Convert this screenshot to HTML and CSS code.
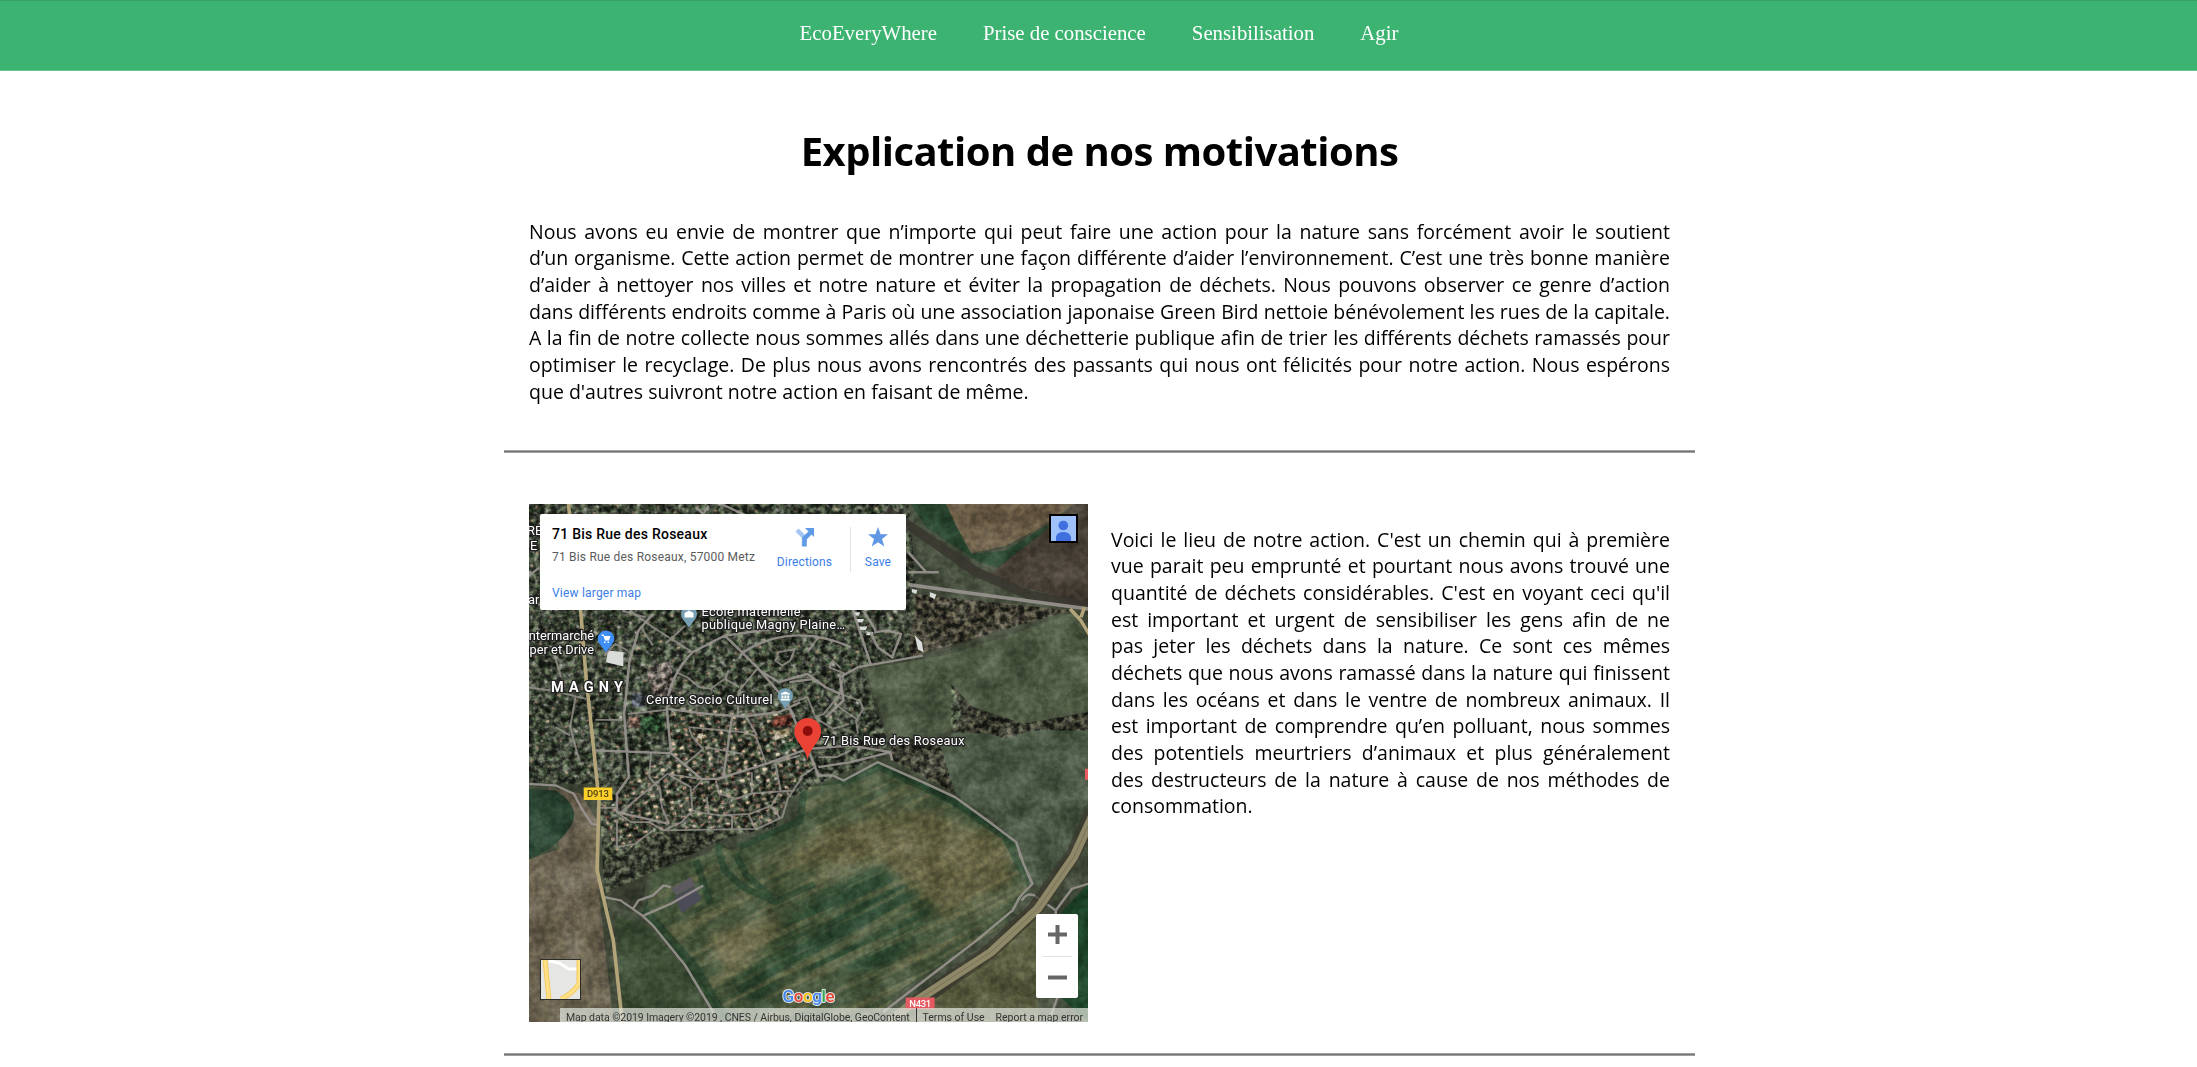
FILE: index.html
```html
<!DOCTYPE html>
<html lang="fr">
<head>
<meta charset="utf-8">
<title>EcoEveryWhere</title>
<link rel="stylesheet" href="styles.css">
</head>
<body>
<nav class="nav">
  <a class="nav-link">EcoEveryWhere</a>
  <a class="nav-link">Prise de conscience</a>
  <a class="nav-link">Sensibilisation</a>
  <a class="nav-link">Agir</a>
</nav>
<main class="page">
  <section class="intro">
    <h1 class="title">Explication de nos motivations</h1>
    <p class="text">Nous avons eu envie de montrer que n’importe qui peut faire une action pour la nature sans forcément avoir le soutient d’un&nbsp;organisme. Cette action permet de montrer une façon différente d’aider l’environnement. C’est une très bonne manière d’aider à nettoyer nos villes et notre nature et éviter la propagation de déchets. Nous pouvons observer ce genre d’action dans différents endroits comme à Paris où une association japonaise Green Bird nettoie bénévolement les rues de la capitale. A la fin de notre collecte nous sommes allés dans une déchetterie publique afin de trier les différents déchets ramassés pour optimiser le recyclage. De plus nous avons rencontrés des passants qui nous ont félicités pour notre action. Nous espérons que d'autres suivront notre action en faisant de même.</p>
  </section>
  <hr class="rule">
  <section class="place">
    <div class="map">
      <svg class="layer" viewBox="5.6 10 1554 1555" preserveAspectRatio="none">
        <defs>
          <filter id="fine" x="0" y="0" width="100%" height="100%" color-interpolation-filters="sRGB">
            <feTurbulence type="fractalNoise" baseFrequency="0.06" numOctaves="3" seed="4"/>
            <feColorMatrix values="2.4 0 0 0 -.75  2.3 .1 0 0 -.75  2.3 0 .1 0 -.75  0 0 0 0 1"/>
          </filter>
          <filter id="soft" x="0" y="0" width="100%" height="100%" color-interpolation-filters="sRGB">
            <feTurbulence type="fractalNoise" baseFrequency="0.012" numOctaves="5" seed="9"/>
            <feColorMatrix values="2 0 0 0 -.5  2 0 0 0 -.5  2 0 0 0 -.5  0 0 0 0 1"/>
          </filter>
          <filter id="furrow" x="0" y="0" width="100%" height="100%" color-interpolation-filters="sRGB">
            <feTurbulence type="fractalNoise" baseFrequency="0.0025 0.045" numOctaves="3" seed="3"/>
            <feColorMatrix values="0 0 0 0 .50  0 0 0 0 .48  0 0 0 0 .34  4 0 0 0 -1.7"/>
          </filter>
          <filter id="blur"><feGaussianBlur stdDeviation="14"/></filter>
          <pattern id="houses" width="46" height="34" patternUnits="userSpaceOnUse" patternTransform="rotate(-14)">
            <path fill="#9c806c" d="M3 4h12v8H3zM27 20h11v9H27z"/><path fill="#7d6a60" d="M26 3h8v8h-8z"/><path fill="#74776e" d="M6 21h9v7H6z"/><path fill="#2c3822" d="M16 6h7v10h-7zM39 6h6v9h-6zM17 23h8v8h-8z"/>
          </pattern>
          <pattern id="oldhouses" width="52" height="42" patternUnits="userSpaceOnUse" patternTransform="rotate(21)">
            <path fill="#666861" d="M4 5h11v8H4zM31 25h9v8h-9z"/><path fill="#73614f" d="M28 6h8v7h-8z"/><path fill="#2b3a27" d="M14 17h14v12H14zM40 8h9v10h-9z"/>
          </pattern>
          <clipPath id="farm"><path d="M780 860L870 850L980 795L1150 890L1300 985L1370 1060L1390 1160L1330 1270L1050 1460L960 1565H560L440 1370L330 1245L350 1120L520 1030L570 1050L660 1010L750 950Z"/></clipPath>
          <clipPath id="west"><path d="M0 1070L200 960L205 1170L260 1565H0Z"/></clipPath>
          <clipPath id="built"><path d="M0 0H1060L1100 460L930 500L1010 740L980 770L850 830L720 900L690 980L560 1010L340 1120L215 1180L200 850L0 850ZM1080 280L1510 330L1060 470ZM1180 550L1240 620L1380 670L1560 635V690L1400 690L1330 715L1290 700L1180 695ZM1015 700L1150 740L1190 880L1010 775Z"/></clipPath>
        </defs>
        <path fill="#454d3c" d="M0 0H1570V1570H0Z"/>
        <path fill="#424a3b" d="M0 0H1060L1160 480L930 500L1010 740L980 770L850 830L720 900L690 980L400 1000L250 1060L200 850L0 850Z"/>
        <path fill="url(#oldhouses)" d="M0 0H1050V310L960 480L870 530L1000 720L1010 760H810L720 640L560 650L390 640L280 850L200 830L0 830Z"/>
        <path fill="url(#houses)" d="M390 620L720 640L760 760L810 790L720 900L690 980L400 985L250 1060L200 920L290 840L390 760Z"/>
        <path fill="#2a4630" d="M1060 0H1190L1240 160L1330 150L1470 60L1450 120L1330 210L1250 180L1110 80Z"/>
        <path fill="#6e604a" d="M1165 10H1520L1430 80L1330 135L1235 158L1195 80Z"/>
        <path fill="#474036" d="M1520 10H1565V320L1280 225L1430 100Z"/>
        <path fill="#413f33" d="M1080 280L1510 330L1330 385L1180 440L1060 470Z"/>
        <path fill="#505b45" d="M940 505L1180 460L1350 400L1520 335L1560 410V640L1370 675L1240 640L1190 690L1010 720Z"/>
        <path fill="#4a5844" d="M1180 700L1560 640V960L1440 1160L1390 1150L1370 1040L1290 950L1190 880L1140 740Z"/>
        <path fill="#3b3c30" d="M1015 700L1150 740L1190 880L1010 775ZM1180 550L1240 620L1380 670L1560 635V690L1400 690L1330 715L1290 700L1180 695L1210 640Z"/>
        <path fill="#20482b" d="M1560 1150L1490 1230L1410 1420L1560 1565Z"/>
        <path fill="#5a5d40" d="M1050 1565L1250 1400L1420 1250V1565Z"/>
        <path fill="#30482f" d="M780 860L870 840L975 785L1190 890L1360 1020L1400 1160L1320 1270L960 1530V1565H540L440 1390L320 1240L360 1120L520 1020L570 1050L750 960Z"/>
        <g clip-path="url(#farm)">
          <path fill="#425239" d="M300 780H1450V1570H300Z"/>
          <path filter="url(#blur)" fill="#736c4a" opacity=".65" d="M820 980L1100 920L1330 1020L1350 1150L1160 1250L980 1080L700 1100ZM500 1300L700 1240L720 1360L560 1440Z"/>
          <path filter="url(#blur)" fill="#2a4930" opacity=".75" d="M800 1190L980 1100L1130 1230L1010 1410L720 1400L650 1520L560 1450Z"/>
          <rect class="stripes" filter="url(#furrow)" x="-400" y="700" width="1700" height="1500" transform="rotate(-28)"/>
        </g>
        <path class="hedge" d="M525 1025L550 1110L600 1160L690 1205L800 1150M580 1060L610 1125L680 1190M770 870L760 960L590 1040M870 850L980 800L1180 900L1330 1010L1380 1120M470 1080L510 1210M330 1230L470 1400L560 1565"/>
        <path fill="#6c6352" d="M0 1080L130 1030L200 960V1180L240 1565H0Z"/>
        <path fill="#6c6352" d="M60 860L150 880L200 970V1180L100 1100Z"/>
        <g clip-path="url(#west)"><rect class="stripes faint" filter="url(#furrow)" x="800" y="-300" width="900" height="500" transform="rotate(85)"/></g>
        <path fill="#2b4533" d="M0 865L80 870Q150 920 125 970Q90 1040 0 1080Z"/>
        <path fill="#3b4c34" d="M245 1245L330 1270L450 1420L520 1565H270Z"/>
        <path fill="#3a4032" d="M215 1090L400 990L560 1000L500 1060L340 1120L310 1240L215 1185Z"/>
        <path fill="#6a625b" d="M330 500L400 480L410 590L350 590Z"/><path fill="#444a52" d="M290 580L325 578L330 620L292 620Z"/><path fill="#764336" d="M685 650L735 640V675L680 680Z"/><path fill="#a2997c" d="M685 690L730 685V705L690 720ZM475 700L490 695L485 730L470 720Z"/>
        <path fill="#2d4a2f" d="M315 650L380 645V695L320 700ZM700 740L750 715V735L710 755Z"/><path fill="#755548" d="M283 650L313 648V680H284Z"/>
        <g class="grain" clip-path="url(#built)"><rect filter="url(#fine)" x="0" y="0" width="1570" height="1570"/></g>
        <rect class="grain light" filter="url(#fine)" x="0" y="0" width="1570" height="1570"/>
        <rect class="cloud" filter="url(#soft)" x="0" y="0" width="1570" height="1570"/>
        <path fill="#5c5a5e" d="M400 1165L455 1130L468 1155L415 1185Z"/><path fill="#4c4c58" d="M412 1190L465 1160L485 1195L430 1238Z"/>
        <path fill="#d9dcd8" d="M225 450L268 455V498L220 485ZM910 335h16l-3 10h-13zM915 355h22l-4 10h-15zM922 378h24l-4 10h-17zM945 395h18l-5 9h-15zM1078 405l20 20 4 30-15-8zM1070 265l15 3-3 12-12-5zM1120 275l18 7-5 14-13-8z"/>
        <path fill="none" stroke="#38352e" stroke-width="28" d="M1000 30L1110 110L1250 215L1400 285L1560 318" opacity=".8"/>
        <path class="road small" d="M0 560L75 572L165 595M75 460L95 530M135 590L120 680L145 780M80 680L120 705M190 658H265M215 465L245 430L280 450M285 330L350 380L460 455M320 385L350 435M265 330L330 350M440 375L385 430M415 515L445 530L480 560L510 565L550 535L590 560M560 510L550 540M585 650L590 570L640 505M700 465L690 480L710 495L732 480L745 445L700 455L695 465M810 410L780 455M885 520L840 500L850 480L870 500M880 520L870 580L825 640L800 650M870 580L925 600L935 625L915 660L920 700M855 610L915 655M800 650L850 685L895 670M740 605L780 590L800 645M720 600L745 650M450 680L600 695L635 705L665 790M450 680L460 710L490 745L435 795M495 740L600 760M610 650L640 705M280 640L390 628M345 755L340 830L370 865L375 920L395 970M480 835L390 820L300 900L260 940M300 900L255 940L290 965L340 965L380 990L430 965L460 930L490 938L540 945L620 940L680 915L705 870L690 785M390 820L455 860L460 930M460 870L490 835M525 840L535 880L580 895L625 880L625 815M615 880L740 870L725 895L710 950L640 985L380 990M500 890L505 940M570 945V985M615 940L635 985M680 920L705 955M250 960V1040L300 1030L350 990M200 922H250M690 785L760 765M760 830L800 800M810 770L860 770L900 750M740 870L765 830"/>
        <path class="road" d="M190 750L400 758L485 835L530 835L665 790L780 745L900 735L1010 755M390 640L400 755M390 640Q385 540 460 455L550 405L680 385L700 390M550 405L640 500L720 600L790 770M390 625L500 640L600 648L700 635L760 605M570 650L545 835M595 460Q660 410 740 405T900 440M640 505L700 545L780 520L830 560L870 580M730 545L800 535M600 450L590 475M350 340L310 390L285 480L270 640L283 830L250 880V935L395 970M900 310L955 490M955 395L975 440L1015 470L1040 400L1000 390L965 395M935 330L970 390M870 530L920 500L1100 465M870 530L880 600L830 650M790 770L810 825L850 825L880 840L975 785L1100 845L1190 890L1280 960L1360 1025L1380 1090L1405 1150L1370 1190L1350 1230L1250 1320L990 1535M810 800L900 785L1010 755L1015 780M1375 1200Q1390 1175 1410 1185L1470 1230L1515 1165L1560 1150M1470 1230V1250M1475 1490L1450 1565M0 850L80 855L130 880L155 930L180 970L200 975M215 1190L260 1200L320 1245L350 1275L440 1395L520 1540M295 1225L310 1200L350 1185L380 1155L400 1160M325 1245L400 1210L490 1155M1060 215L1145 215M1060 155L1110 215M470 20L490 40L505 15M0 230L35 200M540 10L620 50"/>
        <path class="road main" d="M1060 252L1250 280L1560 325"/>
        <path class="route" d="M115 10L150 340L165 540L185 740L200 900L195 1110L212 1190L240 1320L265 1565"/>
        <path fill="none" stroke="#3a372d" stroke-width="44" opacity=".65" d="M1570 940L1520 1060L1410 1230L1280 1360L1080 1510"/>
        <path fill="none" stroke="#8f8868" stroke-width="25" d="M1575 940L1520 1070L1420 1225L1290 1355L1070 1510L1010 1560"/>
        <path fill="none" stroke="#6d694f" stroke-width="2" d="M1575 940L1520 1070L1420 1225L1290 1355L1070 1510"/>
        <path class="route" d="M1510 325L1540 360L1565 405M1540 350L1550 320"/>
      </svg>
      <svg class="layer labels" viewBox="0 0 559 518">
        <text x="22" y="187.500" font-size="14.500" font-weight="700" textLength="72">MAGNY</text>
        <text x="65" y="136" text-anchor="end">Intermarché</text>
        <text x="65" y="149.500" text-anchor="end">Super et Drive</text>
        <text x="172.500" y="112" textLength="99">École maternelle</text>
        <text x="172.500" y="124.500" textLength="143.500">publique Magny Plaine…</text>
        <text x="117" y="199.500" textLength="126.500">Centre Socio Culturel</text>
        <text x="293.500" y="241" textLength="142">71 Bis Rue des Roseaux</text>
        <text x="-2" y="31">RE</text><text x="1" y="46">E</text><text x="-1" y="100">ar</text>
        <g class="pin-blue"><path d="M77 148.500L71.500 141A8.300 8.300 0 1 1 82.500 141Z"/></g>
        <path fill="#fff" d="M72.500 130.500h2l1 1.500h6l-1.500 4.500h-4l-1.500-4.500h-1.500zM75 137.500h1.500v1.500H75zM78.500 137.500H80v1.500h-1.500z"/>
        <g class="pin-gray"><path d="M160 123.500L154.500 116A8 8 0 1 1 165.500 116Z"/><path d="M256.300 204.500L251 197.500A7.700 7.700 0 1 1 261.600 197.500Z"/></g>
        <path fill="#fff" d="M155.500 109l4.500-2.500 4.500 2.500v4.500h-9zM251.800 189.500l4.500-2 4.500 2v1h-9zM252.500 191.500h2v3h-2zM255.400 191.500h2v3h-2zM258.200 191.500h2v3h-2zM251.800 195h9v1.500h-9z"/>
        <path fill="#ea4335" d="M278.700 256.500C277.500 244 265.400 238 265.400 227.200A13.300 13.300 0 0 1 292 227.200C292 238 280 244 278.700 256.500Z"/><circle cx="278.700" cy="227" r="5" fill="#8b0d0a"/>
        <rect x="54.700" y="283.500" width="28.600" height="12.500" fill="#fcce29"/><text class="plate dark" x="69" y="293.300" textLength="22">D913</text>
        <rect x="376.700" y="493.500" width="29" height="12" fill="#e45a60"/><text class="plate" x="391.200" y="502.700" textLength="22">N431</text>
        <rect x="556" y="264.800" width="3" height="11" fill="#ec5a62"/>
        <text class="google" x="253.500" y="498" textLength="52"><tspan fill="#4285f4">G</tspan><tspan fill="#ea4335">o</tspan><tspan fill="#fbbc05">o</tspan><tspan fill="#4285f4">g</tspan><tspan fill="#34a853">l</tspan><tspan fill="#ea4335">e</tspan></text>
      </svg>
      <div class="card">
        <div class="card-text">
          <strong class="card-title">71 Bis Rue des Roseaux</strong>
          <span class="card-address">71 Bis Rue des Roseaux, 57000 Metz</span>
          <a class="card-link">View larger map</a>
        </div>
        <div class="card-action directions">
          <svg width="20" height="20" viewBox="0 0 20 20"><path fill="none" stroke="#a5c6f2" stroke-width="4.500" d="M2 3l7 7v9"/><path fill="none" stroke="#5f9ae6" stroke-width="4.500" d="M9.500 19.500v-8l6-6"/><path fill="#5f9ae6" d="M10 1h9v9z"/></svg>
          Directions
        </div>
        <div class="card-action save">
          <svg width="20" height="20" viewBox="0 0 20 20"><path fill="#5f97e5" d="M10 0l2.600 7.200H20l-6 4.700 2.300 7.700L10 15.200l-6.300 4.400L6 11.900 0 7.200h7.400z"/></svg>
          Save
        </div>
      </div>
      <svg class="avatar" viewBox="0 0 29 29"><path d="M0 0h29v29H0z"/><path fill="#a0c2fb" d="M2 2h25v25H2z"/><circle cx="14.300" cy="11.500" r="4.800" fill="#3f70de"/><path fill="#3f70de" d="M7 27v-4q1-5 7.300-5t7.700 5v4z"/></svg>
      <div class="zoom"><span class="zoom-button"><svg width="19" height="19"><path fill="#666" d="M0 7.500h7.500V0h4v7.500H19v4h-7.500V19h-4v-7.500H0z"/></svg></span><span class="zoom-button"><svg width="19" height="19"><path fill="#666" d="M0 7.500h19v4H0z"/></svg></span></div>
      <svg class="thumb" viewBox="0 0 41 41"><path fill="#2b2b29" d="M0 0h41v41H0z"/><path fill="#e6e6e4" d="M1 1h39v39H1z"/><path fill="none" stroke="#fff" stroke-width="3" d="M9 2l10 2 10 6h11"/><path fill="none" stroke="#f3c85c" stroke-width="5" d="M5 1l4 39M39 1v24q-7 10-18 15"/><path fill="none" stroke="#ffe084" stroke-width="3.200" d="M5 1l4 39M39 1v24q-7 10-18 15"/><path fill="none" stroke="#2b2b29" d="M.5.5h40v40H.5z"/></svg>
      <div class="credits"><span class="data">Map data ©2019 Imagery ©2019 , CNES / Airbus, DigitalGlobe, GeoContent</span><span class="terms">Terms of Use</span><span class="report">Report a map error</span></div>
    </div>
    <p class="text side">Voici le lieu de notre action. C'est un chemin qui à première vue parait peu emprunté et pourtant nous avons trouvé une quantité de déchets considérables. C'est en voyant ceci qu'il est important et urgent de sensibiliser les gens afin de ne pas&nbsp;jeter les déchets dans la nature. Ce sont ces mêmes déchets que nous avons ramassé dans la nature qui finissent dans&nbsp;les océans et dans le ventre de nombreux animaux. Il est&nbsp;important de comprendre qu’en polluant, nous sommes des&nbsp;potentiels meurtriers d’animaux et plus généralement des&nbsp;destructeurs de la nature à cause de nos méthodes de consommation.</p>
  </section>
  <hr class="rule">
</main>
</body>
</html>
```

FILE: styles.css
```css
* { box-sizing: border-box; }
body { margin: 0; background: #fff; color: #000; height: 1067px; overflow: hidden; font-family: "Open Sans", "Noto Sans", sans-serif; }
.nav { height: 71px; background: #3cb371; border-top: 1px solid #38a169; border-bottom: 1px solid #6ac492; display: flex; justify-content: center; gap: 46px; font: 20.800px/23px "Liberation Serif", "Times New Roman", serif; padding: 20px 0 0 1px; }
.nav-link { color: #fff; }
.page { width: 1191px; margin: 0 auto; position: relative; left: 1px; }
.intro { height: 379px; padding: 53px 25px 0; }
.title { margin: 0; text-align: center; font-size: 40px; line-height: 54px; font-weight: 700; letter-spacing: -.5px; }
.text { margin: 40.5px 0 0; font-size: 19.500px; line-height: 26.67px; text-align: justify; }
.rule { height: 3px; margin: 0; border: 0; background: #747474; border-top: 1px solid #a3a3a3; border-bottom: 1px solid #a0a0a0; }
.place { display: flex; gap: 23px; height: 600px; padding: 50.500px 25px 0; }
.text.side { flex: 1; margin-top: 23px; }
.map { position: relative; flex: none; width: 559px; height: 518px; overflow: hidden; font-family: Roboto, sans-serif; }
.layer { position: absolute; inset: 0; width: 559px; height: 518px; }
.stripes { opacity: .5; }
.faint { opacity: .25; }
.grain { mix-blend-mode: overlay; opacity: .6; }
.light { opacity: .13; }
.cloud { mix-blend-mode: soft-light; opacity: .3; }
.hedge { fill: none; stroke: #25422d; stroke-width: 20; opacity: .65; }
.road { fill: none; stroke: #99948f; stroke-width: 7; stroke-linejoin: round; opacity: .9; }
.small { stroke-width: 5.500; opacity: .8; }
.main { stroke-width: 11; }
.route { fill: none; stroke: #b3a579; stroke-width: 10; }
.labels { font: 12.800px Roboto, sans-serif; }
.labels text { fill: #fff; stroke: #222; stroke-width: 2.500px; paint-order: stroke; stroke-linejoin: round; }
.labels .plate { font-size: 9.500px; font-weight: 500; text-anchor: middle; stroke: none; }
.labels .dark { fill: #4c4210; }
.labels .google { font-size: 17px; font-weight: 500; }
.labels .google tspan { stroke: #dfe5df; stroke-width: 2px; }
.pin-blue { fill: #3f8ef5; }
.pin-gray { fill: #78a0b4; }
.card { position: absolute; left: 11px; top: 10.500px; width: 366px; height: 96px; background: #fff; border-radius: 2px; display: flex; padding-left: 12px; }
.card-text { flex: none; display: flex; flex-direction: column; width: 207px; padding-top: 11.500px; }
.card-title { font-size: 14px; line-height: 16px; font-weight: 500; letter-spacing: .25px; }
.card-address { font-size: 12px; line-height: 14px; margin-top: 8px; color: #5b5b5b; white-space: nowrap; letter-spacing: .2px; }
.card-link { font-size: 12px; line-height: 14px; margin-top: 22px; color: #3a7ee6; letter-spacing: .2px; }
.card-action { flex: none; display: flex; flex-direction: column; align-items: center; gap: 8px; height: 45px; margin-top: 12.500px; color: #3a7ee6; font-size: 12px; line-height: 14px; letter-spacing: .15px; }
.directions { width: 92px; border-right: 1px solid #e4e4e4; }
.save { width: 54px; }
.card-action svg { flex: none; }
.avatar { position: absolute; left: 520px; top: 10.500px; width: 29px; height: 29px; }
.zoom { position: absolute; left: 507px; top: 410px; width: 42px; height: 84px; background: #fff; border-radius: 2px; }
.zoom-button { display: flex; height: 42px; align-items: center; justify-content: center; margin: 0 6px; }
.zoom-button + .zoom-button { border-top: 1px solid #e3e3e3; }
.thumb { position: absolute; left: 11px; top: 455px; width: 41px; height: 41px; }
.credits { position: absolute; left: 31px; right: 0; top: 504.500px; height: 14px; background: rgba(225,228,220,.72); display: flex; padding-left: 6px; font-size: 10.500px; line-height: 19px; color: #333; white-space: nowrap; }
.data { width: 350.500px; border-right: 1px solid #333; letter-spacing: -.07px; }
.terms { width: 73px; margin-left: 6px; }
```
